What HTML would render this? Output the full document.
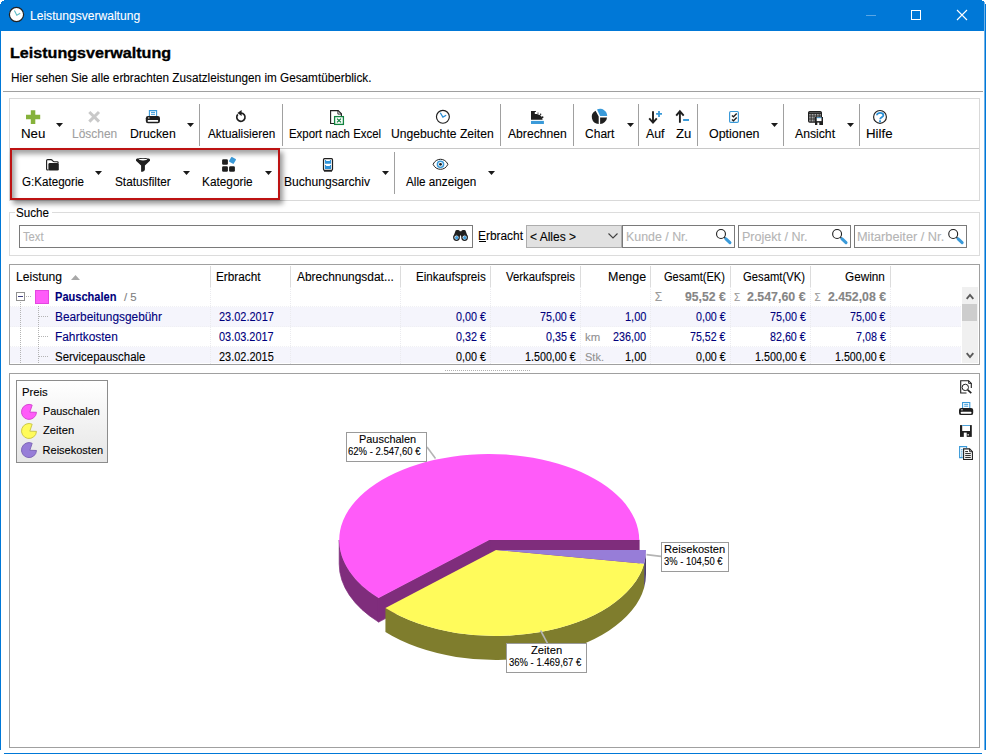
<!DOCTYPE html>
<html><head><meta charset="utf-8"><title>Leistungsverwaltung</title>
<style>
html,body{margin:0;padding:0;}
body{width:986px;height:754px;position:relative;overflow:hidden;background:#fff;font-family:"Liberation Sans",sans-serif;}
.t{position:absolute;white-space:nowrap;-webkit-text-stroke:0.1px currentColor;}
.b{position:absolute;box-sizing:border-box;}
svg{position:absolute;overflow:visible;}
</style></head><body>
<div class="b" style="left:0px;top:0px;width:986px;height:31px;background:#0078d7;"></div>
<div class="b" style="left:0px;top:0px;width:1px;height:750px;background:#0078d7;"></div>
<div class="b" style="left:984px;top:0px;width:1px;height:750px;background:#6fb1e8;"></div>
<div class="b" style="left:985px;top:0px;width:1px;height:750px;background:#0078d7;"></div>
<div class="b" style="left:4px;top:753px;width:978px;height:1px;background:#0078d7;"></div>
<div class="b" style="left:0px;top:0px;width:4px;height:1px;background:#fff;"></div>
<div class="b" style="left:0px;top:1px;width:2px;height:1px;background:#fff;"></div>
<div class="b" style="left:0px;top:2px;width:1px;height:2px;background:#fff;"></div>
<div class="b" style="left:982px;top:0px;width:4px;height:1px;background:#fff;"></div>
<div class="b" style="left:984px;top:1px;width:2px;height:1px;background:#fff;"></div>
<div class="b" style="left:985px;top:2px;width:1px;height:2px;background:#fff;"></div>
<div class="b" style="left:0px;top:750px;width:1px;height:4px;background:#fff;"></div>
<div class="b" style="left:982px;top:753px;width:4px;height:1px;background:#fff;"></div>
<svg style="left:8.2px;top:6.3px" width="17" height="17" viewBox="0 0 17 17"><circle cx="8.5" cy="8.5" r="7.1" fill="#fff" stroke="#222" stroke-width="1.2"/><path d="M6.4 4.6 L8.8 9.3 L12.2 7.2" fill="none" stroke="#5cbcc6" stroke-width="1.1"/></svg>
<div class="t" style="left:29.63px;top:10px;font-size:12px;line-height:12px;color:#fff;transform-origin:0 0;transform:scaleX(1.0065);">Leistungsverwaltung</div>
<div class="b" style="left:866px;top:15px;width:10px;height:1px;background:#5aa6e4;"></div>
<div class="b" style="left:911px;top:10px;width:10px;height:10px;border:1px solid #fff;"></div>
<svg style="left:957px;top:10px" width="10" height="10" viewBox="0 0 10 10"><path d="M0 0 L10 10 M10 0 L0 10" stroke="#fff" stroke-width="1.1" fill="none"/></svg>
<div class="t" style="left:10.45px;top:45px;font-size:15px;line-height:15px;color:#000;transform-origin:0 0;transform:scaleX(1.0740);font-weight:bold;-webkit-text-stroke:0.35px #000;">Leistungsverwaltung</div>
<div class="t" style="left:10.56px;top:72px;font-size:12px;line-height:12px;color:#000;transform-origin:0 0;transform:scaleX(0.9790);">Hier sehen Sie alle erbrachten Zusatzleistungen im Gesamtüberblick.</div>
<div class="b" style="left:3px;top:91px;width:980px;height:1px;background:#a0a0a0;"></div>
<div class="b" style="left:9px;top:98px;width:971px;height:103px;border:1px solid #d9d9d9;"></div>
<div class="b" style="left:10px;top:148px;width:969px;height:1px;background:#c8c8c8;"></div>
<div class="b" style="left:199px;top:104px;width:1px;height:42px;background:#a0a0a0;"></div>
<div class="b" style="left:282px;top:104px;width:1px;height:42px;background:#a0a0a0;"></div>
<div class="b" style="left:500px;top:104px;width:1px;height:42px;background:#a0a0a0;"></div>
<div class="b" style="left:573px;top:104px;width:1px;height:42px;background:#a0a0a0;"></div>
<div class="b" style="left:638px;top:104px;width:1px;height:42px;background:#a0a0a0;"></div>
<div class="b" style="left:697px;top:104px;width:1px;height:42px;background:#a0a0a0;"></div>
<div class="b" style="left:783px;top:104px;width:1px;height:42px;background:#a0a0a0;"></div>
<div class="b" style="left:859px;top:104px;width:1px;height:42px;background:#a0a0a0;"></div>
<div class="b" style="left:394px;top:152px;width:1px;height:42px;background:#a0a0a0;"></div>
<svg style="left:56.0px;top:122.5px" width="7" height="4" viewBox="0 0 7 4"><path d="M0 0 H7 L3.5 4 Z" fill="#1a1a1a"/></svg>
<svg style="left:187.0px;top:122.5px" width="7" height="4" viewBox="0 0 7 4"><path d="M0 0 H7 L3.5 4 Z" fill="#1a1a1a"/></svg>
<svg style="left:626.5px;top:122.5px" width="7" height="4" viewBox="0 0 7 4"><path d="M0 0 H7 L3.5 4 Z" fill="#1a1a1a"/></svg>
<svg style="left:771.0px;top:122.5px" width="7" height="4" viewBox="0 0 7 4"><path d="M0 0 H7 L3.5 4 Z" fill="#1a1a1a"/></svg>
<svg style="left:847.0px;top:122.5px" width="7" height="4" viewBox="0 0 7 4"><path d="M0 0 H7 L3.5 4 Z" fill="#1a1a1a"/></svg>
<svg style="left:95.0px;top:170.5px" width="7" height="4" viewBox="0 0 7 4"><path d="M0 0 H7 L3.5 4 Z" fill="#1a1a1a"/></svg>
<svg style="left:183.0px;top:170.5px" width="7" height="4" viewBox="0 0 7 4"><path d="M0 0 H7 L3.5 4 Z" fill="#1a1a1a"/></svg>
<svg style="left:265.0px;top:170.5px" width="7" height="4" viewBox="0 0 7 4"><path d="M0 0 H7 L3.5 4 Z" fill="#1a1a1a"/></svg>
<svg style="left:382.0px;top:170.5px" width="7" height="4" viewBox="0 0 7 4"><path d="M0 0 H7 L3.5 4 Z" fill="#1a1a1a"/></svg>
<svg style="left:488.0px;top:170.5px" width="7" height="4" viewBox="0 0 7 4"><path d="M0 0 H7 L3.5 4 Z" fill="#1a1a1a"/></svg>
<div class="t" style="left:20.93px;top:128px;font-size:12px;line-height:12px;color:#000;transform-origin:0 0;transform:scaleX(1.1095);">Neu</div>
<div class="t" style="left:71.54px;top:128px;font-size:12px;line-height:12px;color:#a0a0a0;transform-origin:0 0;transform:scaleX(0.9959);">Löschen</div>
<div class="t" style="left:130.02px;top:128px;font-size:12px;line-height:12px;color:#000;transform-origin:0 0;transform:scaleX(1.0228);">Drucken</div>
<div class="t" style="left:208.00px;top:128px;font-size:12px;line-height:12px;color:#000;transform-origin:0 0;transform:scaleX(0.9782);">Aktualisieren</div>
<div class="t" style="left:289.09px;top:128px;font-size:12px;line-height:12px;color:#000;transform-origin:0 0;transform:scaleX(0.9522);">Export nach Excel</div>
<div class="t" style="left:391.09px;top:128px;font-size:12px;line-height:12px;color:#000;transform-origin:0 0;transform:scaleX(1.0122);">Ungebuchte Zeiten</div>
<div class="t" style="left:508.00px;top:128px;font-size:12px;line-height:12px;color:#000;transform-origin:0 0;transform:scaleX(1.0122);">Abrechnen</div>
<div class="t" style="left:585.10px;top:128px;font-size:12px;line-height:12px;color:#000;">Chart</div>
<div class="t" style="left:646.30px;top:128px;font-size:12px;line-height:12px;color:#000;transform-origin:0 0;transform:scaleX(1.0244);">Auf</div>
<div class="t" style="left:675.61px;top:128px;font-size:12px;line-height:12px;color:#000;transform-origin:0 0;transform:scaleX(1.0903);">Zu</div>
<div class="t" style="left:709.04px;top:128px;font-size:12px;line-height:12px;color:#000;transform-origin:0 0;transform:scaleX(1.0367);">Optionen</div>
<div class="t" style="left:795.00px;top:128px;font-size:12px;line-height:12px;color:#000;transform-origin:0 0;transform:scaleX(1.0178);">Ansicht</div>
<div class="t" style="left:866.24px;top:128px;font-size:12px;line-height:12px;color:#000;transform-origin:0 0;transform:scaleX(1.1082);">Hilfe</div>
<div class="t" style="left:21.72px;top:176px;font-size:12px;line-height:12px;color:#000;transform-origin:0 0;transform:scaleX(0.9676);">G:Kategorie</div>
<div class="t" style="left:114.87px;top:176px;font-size:12px;line-height:12px;color:#000;transform-origin:0 0;transform:scaleX(0.9825);">Statusfilter</div>
<div class="t" style="left:202.45px;top:176px;font-size:12px;line-height:12px;color:#000;transform-origin:0 0;transform:scaleX(0.9856);">Kategorie</div>
<div class="t" style="left:284.03px;top:176px;font-size:12px;line-height:12px;color:#000;transform-origin:0 0;transform:scaleX(1.0069);">Buchungsarchiv</div>
<div class="t" style="left:406.00px;top:176px;font-size:12px;line-height:12px;color:#000;transform-origin:0 0;transform:scaleX(0.9756);">Alle anzeigen</div>
<svg style="left:0;top:0" width="986" height="200"><path d="M30.8 110.2 H35.3 V114.8 H40.2 V119.3 H35.3 V123.9 H30.8 V119.3 H26 V114.8 H30.8 Z" fill="#86b23b"/><path d="M89.3 112 L99 121.6 M99 112 L89.3 121.6" fill="none" stroke="#c9c9c9" stroke-width="3.0"/><path d="M149.4 116.1 V110.6 H156.60000000000002 V116.1" fill="none" stroke="#3a9ad9" stroke-width="1.1"/><path d="M151.0 112.39999999999999 H155.0 M151.0 114.3 H155.0" fill="none" stroke="#3a9ad9" stroke-width="1.0"/><rect x="145.8" y="116.0" width="14.2" height="7.2" rx="2.2" fill="#1f1f1f"/><rect x="147.70000000000002" y="119.89999999999999" width="10.4" height="1.9" rx="0.5" fill="#fff"/><rect x="148.0" y="117.5" width="1.5" height="0.9" fill="#fff"/><path d="M241.04 113.05 A4.15 4.15 0 1 1 237.82 114.42" fill="none" stroke="#1f1f1f" stroke-width="1.7"/><path d="M237.4 112.9 L241.6 109.9 L241.6 115.9 Z" fill="#1f1f1f"/><path d="M334 123.5 H330.6 V110.6 H338.2 L341.4 113.8 V116" fill="none" stroke="#1f1f1f" stroke-width="1.1"/><path d="M337.9 110.6 V114.1 H341.4" fill="none" stroke="#1f1f1f" stroke-width="0.9"/><rect x="334.6" y="116.6" width="8.8" height="7.8" fill="#fff" stroke="#12833f" stroke-width="1.3"/><path d="M337 118.6 L341 122.4 M341 118.6 L337 122.4" fill="none" stroke="#12833f" stroke-width="1.3"/><circle cx="442.9" cy="116.8" r="6.45" fill="#fff" stroke="#1f1f1f" stroke-width="1.15"/><path d="M440.3 112.8 L442.9 117.1 L446.2 115.3" fill="none" stroke="#2389d3" stroke-width="1.2"/><path d="M531 111 H535.9 V112 H534.8 V114 C539.5 113.8 542.6 116.2 542.6 119.8 H531 Z" fill="#1f1f1f"/><circle cx="538" cy="113.1" r="0.7" fill="#1f1f1f"/><circle cx="540.6" cy="114.2" r="0.75" fill="#1f1f1f"/><circle cx="542.6" cy="117.2" r="0.85" fill="#1f1f1f"/><rect x="531" y="120.9" width="12.9" height="3.1" fill="#3a9ad9"/><path d="M598.7 124.0 A7.1 7.1 0 0 1 595.57 110.63 L598.7 116.5 Z" fill="#1f1f1f"/><path d="M600.1 117.4 H607.0 A7.1 7.1 0 0 1 600.1 124.0 Z" fill="#1f1f1f"/><path d="M600.1 115.9 L596.99 109.52 A7.1 7.1 0 0 1 607.2 115.9 Z" fill="#3a9ad9"/><path d="M653 111.2 V122.6 M649.2 118.4 L653 122.6 L656.8 118.4" fill="none" stroke="#1f1f1f" stroke-width="1.9" stroke-linejoin="miter"/><path d="M656.1 113.9 H662 M659 111 V116.9" fill="none" stroke="#3a9ad9" stroke-width="1.8"/><path d="M679.9 122.7 V111.3 M676.2 115.6 L679.9 111.3 L683.7 115.6" fill="none" stroke="#1f1f1f" stroke-width="1.9"/><path d="M683.1 120 H689" fill="none" stroke="#3a9ad9" stroke-width="2.0"/><rect x="729.6" y="111.5" width="8.8" height="10.9" rx="1.2" fill="#fff" stroke="#3a9ad9" stroke-width="1.2"/><path d="M731.9 115.4 L733.5 116.8 L736.7 113.5 M731.9 119.4 L733.5 120.8 L736.7 117.5" fill="none" stroke="#1f1f1f" stroke-width="1.3"/><rect x="808.6" y="111.6" width="12.8" height="10.6" rx="1.2" fill="#a8a8a8" stroke="#1f1f1f" stroke-width="1.2"/><path d="M808.6 113.2 H821.4" fill="none" stroke="#1f1f1f" stroke-width="1.4"/><path d="M811.2 113 V122 M814 113 V122 M816.6 113 V122 M819.2 113 V122 M809 116 H821 M809 119 H821" fill="none" stroke="#2a2a2a" stroke-width="0.9"/><rect x="815" y="117" width="8" height="8" fill="#1f1f1f"/><rect x="816.7" y="117.6" width="4.8" height="3.5" fill="#fff"/><rect x="816.7" y="117.3" width="4.8" height="0.9" fill="#3a9ad9"/><rect x="817.3" y="122.6" width="2.0" height="2.4" fill="#fff"/><circle cx="880" cy="116.9" r="6.4" fill="#fff" stroke="#1f1f1f" stroke-width="1.15"/><path d="M876.9 115.2 C876.9 112.2 883.4 112.2 883.4 115.3 C883.4 117.3 880.2 117.3 880.1 119.2" fill="none" stroke="#2a8fd6" stroke-width="1.7"/><rect x="879.1" y="120.3" width="1.9" height="1.9" fill="#2a8fd6"/><path d="M48.5 170 H47.6 Q46.6 170 46.6 169 V160.6 Q46.6 159.6 47.6 159.6 H51 Q51.8 159.6 52.3 160.3 L53 161.1 Q53.5 161.7 54.3 161.7 H57.2 Q58.1 161.7 58.1 162.6 V163.3" fill="none" stroke="#1f1f1f" stroke-width="1.15"/><rect x="48.4" y="163.1" width="10.4" height="7.5" rx="1.3" fill="#1f1f1f"/><path d="M136 159.5 C136 157.5 150 157.5 150 159.5 V160.7 L144.9 165.6 V169.4 C144.9 170.6 143 171.8 141.1 171.8 V165.6 L136 160.7 Z" fill="#1f1f1f"/><ellipse cx="143" cy="159.6" rx="4.2" ry="0.8" fill="#fff"/><rect x="222.1" y="159.2" width="5.8" height="5.6" rx="1.2" fill="#1f1f1f"/><rect x="222.1" y="166.2" width="5.8" height="5.6" rx="1.2" fill="#1f1f1f"/><rect x="229.1" y="166.2" width="5.8" height="5.6" rx="1.2" fill="#1f1f1f"/><rect x="229.8" y="157.7" width="5.4" height="5.4" rx="0.6" fill="#3a9ad9" transform="rotate(30 232.5 160.4)"/><rect x="323.5" y="158.7" width="9" height="11.6" rx="1" fill="#fff" stroke="#1f1f1f" stroke-width="1.2"/><rect x="324" y="170" width="8" height="1.7" fill="#1f1f1f"/><path d="M324.9 160 H326.1 V160.9 H329.9 V160 H331.1 V163.8 H324.9 Z" fill="#2f93d8"/><path d="M324.9 165 H326.1 V165.9 H329.9 V165 H331.1 V168.9 H324.9 Z" fill="#2f93d8"/><path d="M433.1 164.3 C436 157.6 445 157.6 447.9 164.3 C445 171 436 171 433.1 164.3 Z" fill="#fff" stroke="#1f1f1f" stroke-width="1.0"/><circle cx="440.5" cy="164.3" r="3.1" fill="#fff" stroke="#3a9ad9" stroke-width="1.5"/><circle cx="440.5" cy="164.3" r="1.4" fill="#1f1f1f"/></svg>
<div class="b" style="left:9px;top:212px;width:971px;height:44px;border:1px solid #dcdcdc;"></div>
<div class="b" style="left:15px;top:205px;width:37px;height:14px;background:#fff;"></div>
<div class="t" style="left:16.48px;top:207px;font-size:12px;line-height:12px;color:#000;transform-origin:0 0;transform:scaleX(0.9697);">Suche</div>
<div class="b" style="left:19px;top:225px;width:454px;height:23px;border:1px solid #7a7a7a;background:#fff;"></div>
<div class="t" style="left:23.08px;top:231px;font-size:12px;line-height:12px;color:#b4b4b4;transform-origin:0 0;transform:scaleX(0.9346);">Text</div>
<div class="t" style="left:478.05px;top:230px;font-size:12px;line-height:12px;color:#000;transform-origin:0 0;transform:scaleX(0.9923);">Erbracht</div>
<div class="b" style="left:479px;top:241px;width:7px;height:1px;background:#000;"></div>
<div class="b" style="left:526px;top:225px;width:96px;height:23px;border:1px solid #adadad;background:#e1e1e1;"></div>
<div class="t" style="left:529.96px;top:231px;font-size:12px;line-height:12px;color:#000;">&lt; Alles &gt;</div>
<svg style="left:608px;top:233px" width="10" height="6" viewBox="0 0 10 6"><path d="M0.5 0.5 L5 5 L9.5 0.5" fill="none" stroke="#404040" stroke-width="1.1"/></svg>
<div class="b" style="left:622px;top:225px;width:113px;height:23px;border:1px solid #7a7a7a;background:#fff;"></div>
<div class="b" style="left:738px;top:225px;width:113px;height:23px;border:1px solid #7a7a7a;background:#fff;"></div>
<div class="b" style="left:854px;top:225px;width:113px;height:23px;border:1px solid #7a7a7a;background:#fff;"></div>
<div class="t" style="left:625.61px;top:231px;font-size:12px;line-height:12px;color:#b4b4b4;transform-origin:0 0;transform:scaleX(1.0324);">Kunde / Nr.</div>
<div class="t" style="left:741.60px;top:231px;font-size:12px;line-height:12px;color:#b4b4b4;transform-origin:0 0;transform:scaleX(1.0452);">Projekt / Nr.</div>
<div class="t" style="left:856.98px;top:231px;font-size:12px;line-height:12px;color:#b4b4b4;transform-origin:0 0;transform:scaleX(1.0628);">Mitarbeiter / Nr.</div>
<svg style="left:0;top:0" width="986" height="260"><path d="M455.6 230.6 Q455.9 229.9 456.7 229.9 H458.2 Q459 229.9 459.4 230.6 L459.8 231.3 H461.3 L461.7 230.6 Q462.1 229.9 462.9 229.9 H464.4 Q465.2 229.9 465.5 230.6 L468 237.6 H461.8 L460.55 235 L459.3 237.6 H453.1 Z" fill="#1f1f1f"/><circle cx="456.5" cy="237.6" r="2.75" fill="#fff" stroke="#1f1f1f" stroke-width="1.2"/><circle cx="456.7" cy="237.8" r="1.7" fill="#43a0de"/><circle cx="464.6" cy="237.6" r="2.75" fill="#fff" stroke="#1f1f1f" stroke-width="1.2"/><circle cx="464.8" cy="237.8" r="1.7" fill="#43a0de"/><circle cx="721" cy="234" r="4.45" fill="#fff" stroke="#1f1f1f" stroke-width="1.1"/><path d="M724.3 237.3 L725.6 238.6" stroke="#1f1f1f" stroke-width="1.4"/><path d="M725.9 238.9 L729.9 242.6" stroke="#3a9ad9" stroke-width="3.1" stroke-linecap="round"/><circle cx="837.1" cy="234" r="4.45" fill="#fff" stroke="#1f1f1f" stroke-width="1.1"/><path d="M840.4 237.3 L841.7 238.6" stroke="#1f1f1f" stroke-width="1.4"/><path d="M842.0 238.9 L846.0 242.6" stroke="#3a9ad9" stroke-width="3.1" stroke-linecap="round"/><circle cx="953.2" cy="234" r="4.45" fill="#fff" stroke="#1f1f1f" stroke-width="1.1"/><path d="M956.5 237.3 L957.8000000000001 238.6" stroke="#1f1f1f" stroke-width="1.4"/><path d="M958.1 238.9 L962.1 242.6" stroke="#3a9ad9" stroke-width="3.1" stroke-linecap="round"/></svg>
<div class="b" style="left:10px;top:148px;width:270px;height:52px;border:2px solid #bd1212;box-shadow:3px 4px 5px rgba(0,0,0,0.40), inset 3px 4px 5px rgba(0,0,0,0.36);"></div>
<div class="b" style="left:9px;top:264px;width:971px;height:101px;border:1px solid #a0a0a0;background:#fff;"></div>
<div class="b" style="left:10px;top:307px;width:951px;height:20px;background:#f5f5fc;"></div>
<div class="b" style="left:10px;top:347px;width:951px;height:16px;background:#f5f5fc;"></div>
<div class="b" style="left:210px;top:266px;width:1px;height:21px;background:#dcdcdc;"></div>
<div class="b" style="left:210px;top:287px;width:1px;height:77px;background:repeating-linear-gradient(to bottom,#ebebef 0 1px,transparent 1px 2px);"></div>
<div class="b" style="left:290px;top:266px;width:1px;height:21px;background:#dcdcdc;"></div>
<div class="b" style="left:290px;top:287px;width:1px;height:77px;background:repeating-linear-gradient(to bottom,#ebebef 0 1px,transparent 1px 2px);"></div>
<div class="b" style="left:400px;top:266px;width:1px;height:21px;background:#dcdcdc;"></div>
<div class="b" style="left:400px;top:287px;width:1px;height:77px;background:repeating-linear-gradient(to bottom,#ebebef 0 1px,transparent 1px 2px);"></div>
<div class="b" style="left:490px;top:266px;width:1px;height:21px;background:#dcdcdc;"></div>
<div class="b" style="left:490px;top:287px;width:1px;height:77px;background:repeating-linear-gradient(to bottom,#ebebef 0 1px,transparent 1px 2px);"></div>
<div class="b" style="left:580px;top:266px;width:1px;height:21px;background:#dcdcdc;"></div>
<div class="b" style="left:580px;top:287px;width:1px;height:77px;background:repeating-linear-gradient(to bottom,#ebebef 0 1px,transparent 1px 2px);"></div>
<div class="b" style="left:650px;top:266px;width:1px;height:21px;background:#dcdcdc;"></div>
<div class="b" style="left:650px;top:287px;width:1px;height:77px;background:repeating-linear-gradient(to bottom,#ebebef 0 1px,transparent 1px 2px);"></div>
<div class="b" style="left:730px;top:266px;width:1px;height:21px;background:#dcdcdc;"></div>
<div class="b" style="left:730px;top:287px;width:1px;height:77px;background:repeating-linear-gradient(to bottom,#ebebef 0 1px,transparent 1px 2px);"></div>
<div class="b" style="left:810px;top:266px;width:1px;height:21px;background:#dcdcdc;"></div>
<div class="b" style="left:810px;top:287px;width:1px;height:77px;background:repeating-linear-gradient(to bottom,#ebebef 0 1px,transparent 1px 2px);"></div>
<div class="b" style="left:890px;top:266px;width:1px;height:21px;background:#dcdcdc;"></div>
<div class="b" style="left:890px;top:287px;width:1px;height:77px;background:repeating-linear-gradient(to bottom,#ebebef 0 1px,transparent 1px 2px);"></div>
<div class="b" style="left:10px;top:306px;width:952px;height:1px;background:repeating-linear-gradient(to right,#f0f0f4 0 1px,transparent 1px 2px);"></div>
<div class="b" style="left:10px;top:326px;width:952px;height:1px;background:repeating-linear-gradient(to right,#f0f0f4 0 1px,transparent 1px 2px);"></div>
<div class="b" style="left:10px;top:346px;width:952px;height:1px;background:repeating-linear-gradient(to right,#f0f0f4 0 1px,transparent 1px 2px);"></div>
<div class="t" style="left:16.23px;top:271px;font-size:12px;line-height:12px;color:#000;transform-origin:0 0;transform:scaleX(1.0119);">Leistung</div>
<svg style="left:71px;top:275px" width="9" height="5" viewBox="0 0 9 5"><path d="M0 5 L4.5 0 L9 5 Z" fill="#a8a8a8"/></svg>
<div class="t" style="left:216.36px;top:271px;font-size:12px;line-height:12px;color:#000;transform-origin:0 0;transform:scaleX(0.9811);">Erbracht</div>
<div class="t" style="left:297.40px;top:271px;font-size:12px;line-height:12px;color:#000;transform-origin:0 0;transform:scaleX(0.9942);">Abrechnungsdat...</div>
<div class="t" style="left:415.67px;top:271px;font-size:12px;line-height:12px;color:#000;transform-origin:0 0;transform:scaleX(0.9677);">Einkaufspreis</div>
<div class="t" style="left:506.40px;top:271px;font-size:12px;line-height:12px;color:#000;transform-origin:0 0;transform:scaleX(0.9488);">Verkaufspreis</div>
<div class="t" style="left:607.70px;top:271px;font-size:12px;line-height:12px;color:#000;transform-origin:0 0;transform:scaleX(1.0392);">Menge</div>
<div class="t" style="left:664.05px;top:271px;font-size:12px;line-height:12px;color:#000;transform-origin:0 0;transform:scaleX(0.9222);">Gesamt(EK)</div>
<div class="t" style="left:743.14px;top:271px;font-size:12px;line-height:12px;color:#000;transform-origin:0 0;transform:scaleX(0.9376);">Gesamt(VK)</div>
<div class="t" style="left:845.41px;top:271px;font-size:12px;line-height:12px;color:#000;transform-origin:0 0;transform:scaleX(0.9807);">Gewinn</div>
<div class="b" style="left:16px;top:292px;width:9px;height:9px;border:1px solid #919191;background:#fff;"></div>
<div class="b" style="left:18px;top:296px;width:5px;height:1px;background:#404080;"></div>
<div class="b" style="left:26px;top:296px;width:5px;height:1px;background:repeating-linear-gradient(to right,#b4b4b4 0 1px,transparent 1px 2px);"></div>
<div class="b" style="left:20px;top:302px;width:1px;height:62px;background:repeating-linear-gradient(to bottom,#b4b4b4 0 1px,transparent 1px 2px);"></div>
<div class="b" style="left:38px;top:306px;width:1px;height:58px;background:repeating-linear-gradient(to bottom,#b4b4b4 0 1px,transparent 1px 2px);"></div>
<div class="b" style="left:39px;top:316px;width:9px;height:1px;background:repeating-linear-gradient(to right,#b4b4b4 0 1px,transparent 1px 2px);"></div>
<div class="b" style="left:39px;top:336px;width:9px;height:1px;background:repeating-linear-gradient(to right,#b4b4b4 0 1px,transparent 1px 2px);"></div>
<div class="b" style="left:39px;top:356px;width:9px;height:1px;background:repeating-linear-gradient(to right,#b4b4b4 0 1px,transparent 1px 2px);"></div>
<div class="b" style="left:35px;top:290px;width:14px;height:14px;background:#ff5bf9;border:1px solid #e346e0;"></div>
<div class="t" style="left:54.78px;top:291px;font-size:12px;line-height:12px;color:#00007d;transform-origin:0 0;transform:scaleX(0.9223);font-weight:bold;">Pauschalen</div>
<div class="t" style="left:124.20px;top:292px;font-size:11px;line-height:11px;color:#808080;transform-origin:0 0;transform:scaleX(1.0365);">/ 5</div>
<div class="t" style="left:54.55px;top:311px;font-size:12px;line-height:12px;color:#00007d;transform-origin:0 0;transform:scaleX(0.9890);">Bearbeitungsgebühr</div>
<div class="t" style="left:54.55px;top:331px;font-size:12px;line-height:12px;color:#00007d;transform-origin:0 0;transform:scaleX(0.9906);">Fahrtkosten</div>
<div class="t" style="left:54.98px;top:351px;font-size:12px;line-height:12px;color:#000;transform-origin:0 0;transform:scaleX(0.9550);">Servicepauschale</div>
<div class="t" style="left:218.65px;top:311px;font-size:12px;line-height:12px;color:#00007d;transform-origin:0 0;transform:scaleX(0.9131);">23.02.2017</div>
<div class="t" style="left:218.82px;top:331px;font-size:12px;line-height:12px;color:#00007d;transform-origin:0 0;transform:scaleX(0.9103);">03.03.2017</div>
<div class="t" style="left:218.65px;top:351px;font-size:12px;line-height:12px;color:#000;transform-origin:0 0;transform:scaleX(0.9122);">23.02.2015</div>
<div class="t" style="left:456.12px;top:311px;font-size:12px;line-height:12px;color:#00007d;transform-origin:0 0;transform:scaleX(0.8988);">0,00 €</div>
<div class="t" style="left:456.12px;top:331px;font-size:12px;line-height:12px;color:#00007d;transform-origin:0 0;transform:scaleX(0.8988);">0,32 €</div>
<div class="t" style="left:456.12px;top:351px;font-size:12px;line-height:12px;color:#000;transform-origin:0 0;transform:scaleX(0.8988);">0,00 €</div>
<div class="t" style="left:540.16px;top:311px;font-size:12px;line-height:12px;color:#00007d;transform-origin:0 0;transform:scaleX(0.8931);">75,00 €</div>
<div class="t" style="left:545.92px;top:331px;font-size:12px;line-height:12px;color:#00007d;transform-origin:0 0;transform:scaleX(0.8988);">0,35 €</div>
<div class="t" style="left:525.20px;top:351px;font-size:12px;line-height:12px;color:#000;transform-origin:0 0;transform:scaleX(0.8944);">1.500,00 €</div>
<div class="t" style="left:584.76px;top:332px;font-size:11px;line-height:11px;color:#909090;transform-origin:0 0;transform:scaleX(1.0336);">km</div>
<div class="t" style="left:585.00px;top:352px;font-size:11px;line-height:11px;color:#909090;">Stk.</div>
<div class="t" style="left:624.97px;top:311px;font-size:12px;line-height:12px;color:#00007d;transform-origin:0 0;transform:scaleX(0.9173);">1,00</div>
<div class="t" style="left:613.46px;top:331px;font-size:12px;line-height:12px;color:#00007d;transform-origin:0 0;transform:scaleX(0.8964);">236,00</div>
<div class="t" style="left:624.97px;top:351px;font-size:12px;line-height:12px;color:#000;transform-origin:0 0;transform:scaleX(0.9173);">1,00</div>
<div class="t" style="left:654.80px;top:291px;font-size:12px;line-height:12px;color:#9a9a9a;font-family:"Liberation Serif",serif;">Σ</div>
<div class="t" style="left:685.33px;top:291px;font-size:12px;line-height:12px;color:#858585;transform-origin:0 0;transform:scaleX(1.0157);font-weight:bold;">95,52 €</div>
<div class="t" style="left:696.23px;top:311px;font-size:12px;line-height:12px;color:#00007d;transform-origin:0 0;transform:scaleX(0.8897);">0,00 €</div>
<div class="t" style="left:690.47px;top:331px;font-size:12px;line-height:12px;color:#00007d;transform-origin:0 0;transform:scaleX(0.8855);">75,52 €</div>
<div class="t" style="left:696.23px;top:351px;font-size:12px;line-height:12px;color:#000;transform-origin:0 0;transform:scaleX(0.8897);">0,00 €</div>
<div class="t" style="left:734.10px;top:293px;font-size:10px;line-height:10px;color:#9a9a9a;font-family:"Liberation Serif",serif;">Σ</div>
<div class="t" style="left:747.43px;top:291px;font-size:12px;line-height:12px;color:#858585;transform-origin:0 0;transform:scaleX(1.0328);font-weight:bold;">2.547,60 €</div>
<div class="t" style="left:770.06px;top:311px;font-size:12px;line-height:12px;color:#00007d;transform-origin:0 0;transform:scaleX(0.8957);">75,00 €</div>
<div class="t" style="left:770.17px;top:331px;font-size:12px;line-height:12px;color:#00007d;transform-origin:0 0;transform:scaleX(0.8929);">82,60 €</div>
<div class="t" style="left:754.99px;top:351px;font-size:12px;line-height:12px;color:#000;transform-origin:0 0;transform:scaleX(0.8980);">1.500,00 €</div>
<div class="t" style="left:814.50px;top:293px;font-size:10px;line-height:10px;color:#9a9a9a;font-family:"Liberation Serif",serif;">Σ</div>
<div class="t" style="left:827.63px;top:291px;font-size:12px;line-height:12px;color:#858585;transform-origin:0 0;transform:scaleX(1.0221);font-weight:bold;">2.452,08 €</div>
<div class="t" style="left:850.07px;top:311px;font-size:12px;line-height:12px;color:#00007d;transform-origin:0 0;transform:scaleX(0.8855);">75,00 €</div>
<div class="t" style="left:855.66px;top:331px;font-size:12px;line-height:12px;color:#00007d;transform-origin:0 0;transform:scaleX(0.8946);">7,08 €</div>
<div class="t" style="left:835.00px;top:351px;font-size:12px;line-height:12px;color:#000;transform-origin:0 0;transform:scaleX(0.8908);">1.500,00 €</div>
<div class="b" style="left:962px;top:287px;width:16px;height:76px;background:#f0f0f0;"></div>
<div class="b" style="left:962px;top:304px;width:15px;height:17px;background:#cdcdcd;"></div>
<svg style="left:965.5px;top:292.5px" width="8" height="7" viewBox="0 0 8 7"><path d="M0.7 5.8 L4 2 L7.3 5.8" fill="none" stroke="#5a5a5a" stroke-width="1.9"/></svg>
<svg style="left:965.5px;top:351.5px" width="8" height="7" viewBox="0 0 8 7"><path d="M0.7 1.2 L4 5 L7.3 1.2" fill="none" stroke="#5a5a5a" stroke-width="1.9"/></svg>
<div class="b" style="left:445px;top:370px;width:86px;height:1px;background:repeating-linear-gradient(to right,#b0b0b0 0 1px,transparent 1px 2px);"></div>
<div class="b" style="left:9px;top:373px;width:971px;height:375px;border:1px solid #a0a0a0;background:#fff;"></div>
<svg style="left:0;top:0" width="986" height="470"><path d="M971.3 388 V383.4 L968.6 380.7 H960.7 V393 H966.5" fill="none" stroke="#1f1f1f" stroke-width="1.1"/><path d="M968.6 380.7 V383.4 H971.3" fill="none" stroke="#1f1f1f" stroke-width="0.9"/><circle cx="965.3" cy="387.4" r="3.2" fill="#fff" stroke="#1f1f1f" stroke-width="1.0"/><path d="M967.7 389.8 L971.3 393.2" fill="none" stroke="#1f1f1f" stroke-width="1.6"/><path d="M962.6 408.0 V402.5 H969.8 V408.0" fill="none" stroke="#3a9ad9" stroke-width="1.1"/><path d="M964.2 404.3 H968.2 M964.2 406.2 H968.2" fill="none" stroke="#3a9ad9" stroke-width="1.0"/><rect x="959.0" y="407.9" width="14.2" height="7.2" rx="2.2" fill="#1f1f1f"/><rect x="960.9" y="411.8" width="10.4" height="1.9" rx="0.5" fill="#fff"/><rect x="961.2" y="409.4" width="1.5" height="0.9" fill="#fff"/><rect x="960" y="425.1" width="11.8" height="11.8" fill="#1f1f1f"/><rect x="962.2" y="425.1" width="7.8" height="5.9" fill="#fff"/><rect x="962.2" y="425.1" width="7.8" height="0.9" fill="#3a9ad9"/><rect x="963.8" y="432.6" width="2.9" height="4.4" fill="#fff"/><rect x="967.6" y="434" width="1.1" height="1.6" fill="#fff"/><path d="M966.6 448 V446.6 H959.6 V457.6 H962.8" fill="none" stroke="#3a9ad9" stroke-width="1.1"/><path d="M961 449.8 H962.6 M961 451.9 H962.6 M961 454 H962.6 M961 456 H962.6" fill="none" stroke="#3a9ad9" stroke-width="1.0"/><path d="M963.6 448.9 H969.6 L972.4 451.7 V459.5 H963.6 Z" fill="#fff" stroke="#1f1f1f" stroke-width="1.1"/><path d="M969.6 448.9 V451.7 H972.4" fill="none" stroke="#1f1f1f" stroke-width="0.9"/><path d="M965.2 451.6 H968 M965.2 453.6 H970.8 M965.2 455.6 H970.8 M965.2 457.6 H970.8" fill="none" stroke="#1f1f1f" stroke-width="1.0"/></svg>
<div class="b" style="left:16px;top:380px;width:92px;height:83px;border:1px solid #8c8c8c;background:linear-gradient(to bottom,#ffffff,#e6e6e6);"></div>
<div class="t" style="left:22.30px;top:387px;font-size:11px;line-height:11px;color:#000;transform-origin:0 0;transform:scaleX(1.0246);">Preis</div>
<svg style="left:0;top:0" width="986" height="754"><path d="M29.80 412.10 L36.49 412.29 A7.5 7.5 0 1 1 32.17 405.10 Z" fill="#ff5bf9" stroke="#d548d2" stroke-width="1"/></svg>
<svg style="left:0;top:0" width="986" height="754"><path d="M29.80 431.20 L36.49 431.39 A7.5 7.5 0 1 1 32.17 424.20 Z" fill="#fffb5b" stroke="#cdc94a" stroke-width="1"/></svg>
<svg style="left:0;top:0" width="986" height="754"><path d="M29.80 450.30 L36.49 450.49 A7.5 7.5 0 1 1 32.17 443.30 Z" fill="#977dd8" stroke="#7f68b8" stroke-width="1"/></svg>
<div class="t" style="left:42.63px;top:406px;font-size:11px;line-height:11px;color:#000;transform-origin:0 0;transform:scaleX(0.9869);">Pauschalen</div>
<div class="t" style="left:43.16px;top:425px;font-size:11px;line-height:11px;color:#000;transform-origin:0 0;transform:scaleX(1.0172);">Zeiten</div>
<div class="t" style="left:42.62px;top:445px;font-size:11px;line-height:11px;color:#000;">Reisekosten</div>
<svg style="left:0;top:0" width="986" height="754" shape-rendering="geometricPrecision"><path d="M339.20 540.00 A150 86 0 0 0 378.63 598.11 L378.63 622.11 A150 86 0 0 1 339.20 564.00 Z" fill="#7f2d7c" stroke="#7f2d7c" stroke-width="0.7"/><path d="M489.2 540 L378.63 598.11 L378.63 622.11 L489.2 564 Z" fill="#7f2d7c" stroke="#7f2d7c" stroke-width="0.7"/><path d="M489.2 540 L639.20 540.00 L639.20 564.00 L489.2 564 Z" fill="#7f2d7c" stroke="#7f2d7c" stroke-width="0.7"/><rect x="377.63" y="598.91" width="2" height="22.4" fill="#7f2d7c"/><rect x="488.2" y="540.5" width="2" height="23" fill="#7f2d7c"/><path d="M489.2 540 L378.63 598.11 A150 86 0 1 1 639.20 540.00 Z" fill="#ff5bf9"/><path d="M646.00 550.00 A150 86 0 0 1 644.10 563.64 L644.10 587.64 A150 86 0 0 0 646.00 574.00 Z" fill="#4b3e6c"/><path d="M644.10 563.64 A150 86 0 0 1 385.43 608.11 L385.43 632.11 A150 86 0 0 0 644.10 587.64 Z" fill="#7f7d2d"/><path d="M496 550 L644.10 563.64 A150 86 0 0 1 385.43 608.11 Z" fill="#fffb5b"/><path d="M496 550 L646.00 550.00 A150 86 0 0 1 644.10 563.64 Z" fill="#977dd8"/><path d="M427 447 L435.5 458.5" stroke="#b4b4b4" stroke-width="1.6" fill="none"/><path d="M646.5 554.6 L661 556.4" stroke="#b4b4b4" stroke-width="1.6" fill="none"/><path d="M540.6 630.5 L547.6 643.6" stroke="#b4b4b4" stroke-width="1.6" fill="none"/></svg>
<div class="b" style="left:346px;top:432px;width:81px;height:30px;border:1px solid #9a9a9a;background:#fff;"></div>
<div class="t" style="left:358.53px;top:434px;font-size:11px;line-height:11px;color:#000;transform-origin:0 0;transform:scaleX(0.9940);">Pauschalen</div>
<div class="t" style="left:347.82px;top:447px;font-size:10px;line-height:10px;color:#000;transform-origin:0 0;transform:scaleX(0.9517);">62% - 2.547,60 €</div>
<div class="b" style="left:661px;top:542px;width:68px;height:30px;border:1px solid #9a9a9a;background:#fff;"></div>
<div class="t" style="left:664.31px;top:544px;font-size:11px;line-height:11px;color:#000;transform-origin:0 0;transform:scaleX(1.0092);">Reisekosten</div>
<div class="t" style="left:664.07px;top:557px;font-size:10px;line-height:10px;color:#000;transform-origin:0 0;transform:scaleX(0.9401);">3% - 104,50 €</div>
<div class="b" style="left:506px;top:643px;width:81px;height:30px;border:1px solid #9a9a9a;background:#fff;"></div>
<div class="t" style="left:531.26px;top:645px;font-size:11px;line-height:11px;color:#000;transform-origin:0 0;transform:scaleX(1.0172);">Zeiten</div>
<div class="t" style="left:508.87px;top:658px;font-size:10px;line-height:10px;color:#000;transform-origin:0 0;transform:scaleX(0.9485);">36% - 1.469,67 €</div>
</body></html>
